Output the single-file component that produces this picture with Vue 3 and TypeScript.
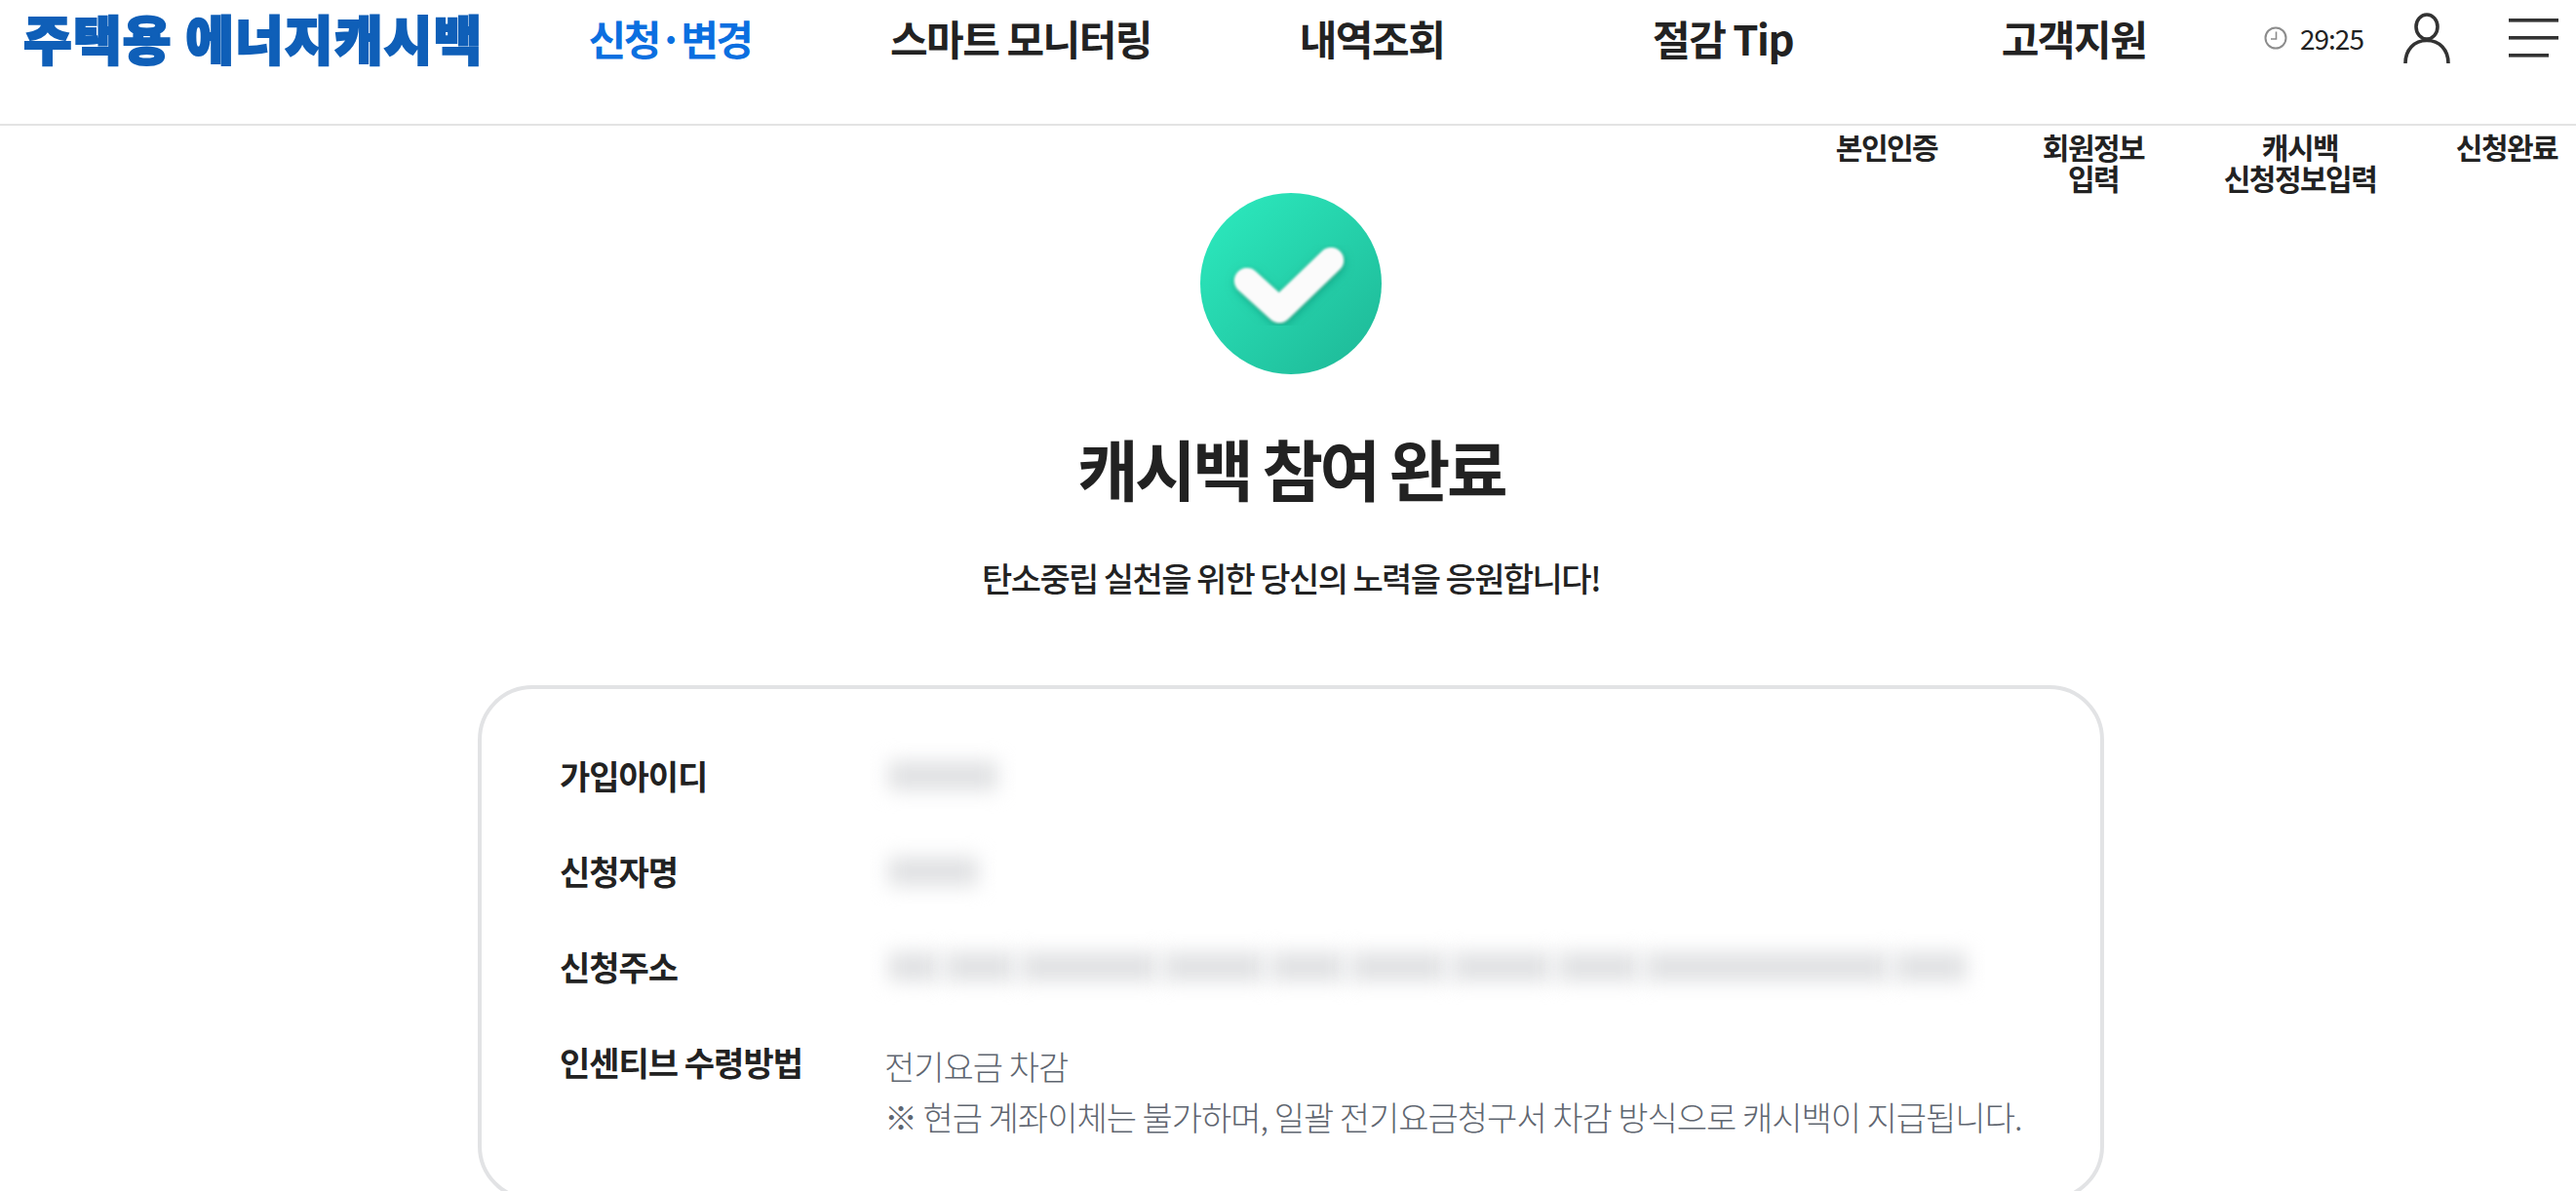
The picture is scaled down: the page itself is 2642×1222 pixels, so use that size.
<script setup lang="ts">
interface InfoRow {
  label: string;
  blurred?: number[];
  lines?: string[];
}

const navItems = ['신청·변경', '스마트 모니터링', '내역조회', '절감 Tip', '고객지원'];

const steps = ['본인인증', '회원정보\n입력', '캐시백\n신청정보입력', '신청완료'];

const rows: InfoRow[] = [
  { label: '가입아이디', blurred: [112] },
  { label: '신청자명', blurred: [92] },
  {
    label: '신청주소',
    blurred: [52, 72, 140, 104, 76, 98, 102, 84, 250, 74]
  },
  {
    label: '인센티브 수령방법',
    lines: ['전기요금 차감', '※ 현금 계좌이체는 불가하며, 일괄 전기요금청구서 차감 방식으로 캐시백이 지급됩니다.']
  }
];
</script>

<template>
  <div class="page">
    <header class="header">
      <div class="logo">주택용 에너지캐시백</div>
      <nav class="nav">
        <a
            v-for="(item, i) in navItems"
            :key="item"
            class="nav-item"
            :class="{ active: i === 0 }"
        >{{ item }}</a>
      </nav>
      <div class="tools">
        <svg class="clock" width="24" height="24" viewBox="0 0 24 24" fill="none" stroke="#8c8c8c">
          <circle cx="12" cy="12" r="10.5" stroke-width="2" />
          <path d="M12.5 5.5V13H7" stroke-width="1.6" />
        </svg>
        <span class="time">29:25</span>
        <svg class="user" width="50" height="52" viewBox="0 0 50 52" fill="none" stroke="#333" stroke-width="3.6">
          <ellipse cx="25" cy="14.5" rx="11" ry="12.5" />
          <path d="M3 52C3 38 12 28.5 25 28.5S47 38 47 52" />
        </svg>
        <svg class="menu" width="51" height="40" viewBox="0 0 51 40" fill="#333">
          <rect x="0" y="0" width="51" height="3.6" />
          <rect x="0" y="18" width="51" height="3.6" />
          <rect x="0" y="36" width="41" height="3.6" />
        </svg>
      </div>
    </header>

    <ol class="steps">
      <li v-for="step in steps" :key="step" class="step">{{ step }}</li>
    </ol>

    <main class="content">
      <svg class="done-icon" width="186" height="186" viewBox="0 0 186 186">
        <defs>
          <linearGradient id="doneFill" x1="0.12" y1="0.1" x2="0.9" y2="0.9">
            <stop offset="0" stop-color="#2be6bb" />
            <stop offset="1" stop-color="#1fbc9a" />
          </linearGradient>
          <filter id="doneShadow" x="-30%" y="-30%" width="160%" height="160%">
            <feGaussianBlur in="SourceGraphic" stdDeviation="1.2" result="soft" />
            <feDropShadow in="soft" dx="1" dy="3" stdDeviation="5" flood-color="#0f8a6e" flood-opacity="0.6" />
          </filter>
        </defs>
        <circle cx="93" cy="93" r="93" fill="url(#doneFill)" />
        <path
            d="M48 90L81 120L134 69"
            fill="none"
            stroke="#fbfbfb"
            stroke-width="26"
            stroke-linecap="round"
            stroke-linejoin="round"
            filter="url(#doneShadow)"
        />
      </svg>

      <h1 class="title">캐시백 참여 완료</h1>
      <p class="subtitle">탄소중립 실천을 위한 당신의 노력을 응원합니다!</p>

      <section class="card">
        <div v-for="row in rows" :key="row.label" class="row">
          <div class="row-label">{{ row.label }}</div>
          <div v-if="row.blurred" class="row-blur">
            <span
                v-for="(w, i) in row.blurred"
                :key="i"
                class="blur-chunk"
                :style="{ width: `${w}px` }"
            ></span>
          </div>
          <div v-else class="row-value">
            <div v-for="line in row.lines" :key="line">{{ line }}</div>
          </div>
        </div>
      </section>
    </main>
  </div>
</template>

<style>
html,
body {
  overflow: hidden;
  background: #fff;
}
</style>

<style scoped>
.page {
  font-family: "Noto Sans CJK KR", "Noto Sans", sans-serif;
  color: #222;
  height: 1222px;
  overflow: hidden;
}

.header {
  display: flex;
  align-items: center;
  height: 78px;
  padding: 0 18px 49px 24px;
  border-bottom: 2px solid #e3e3e3;
}

.logo {
  width: 483px;
  flex-shrink: 0;
  font-size: 54px;
  font-weight: 900;
  line-height: 1;
  letter-spacing: 1.2px;
  color: #0f5fb8;
  white-space: nowrap;
  -webkit-text-stroke: 2px #0f5fb8;
  filter: blur(0.4px);
}

.nav {
  display: grid;
  grid-template-columns: repeat(5, 360px);
  flex-shrink: 0;
}

.nav-item {
  text-align: center;
  font-size: 42px;
  font-weight: 700;
  line-height: 60px;
  letter-spacing: -1.5px;
  white-space: nowrap;
}

.nav-item.active {
  color: #0b6fe0;
  letter-spacing: -2.5px;
}

.tools {
  display: flex;
  align-items: center;
  margin-left: 15px;
}

.time {
  margin-left: 13px;
  font-size: 28px;
  letter-spacing: -1px;
  color: #222;
}

.user {
  margin-left: 40px;
}

.menu {
  margin-left: 59px;
}

.steps {
  display: grid;
  grid-template-columns: repeat(4, 106px);
  column-gap: 106px;
  justify-content: end;
  list-style: none;
  margin: 0;
  padding: 5px 18px 0 0;
  height: 64px;
}

.step {
  display: flex;
  flex-direction: column;
  align-items: center;
  text-align: center;
  font-size: 30px;
  font-weight: 700;
  line-height: 32px;
  letter-spacing: -1.5px;
  white-space: pre;
}

.content {
  display: flex;
  flex-direction: column;
  align-items: center;
  padding-left: 6px;
}

.done-icon {
  display: block;
}

.title {
  margin: 56px 0 0;
  font-size: 68px;
  font-weight: 700;
  line-height: 80px;
  letter-spacing: -3.4px;
}

.subtitle {
  margin: 49px 0 0;
  font-size: 34px;
  font-weight: 500;
  line-height: 48px;
  letter-spacing: -1.6px;
}

.card {
  box-sizing: border-box;
  width: 1668px;
  margin-top: 86px;
  padding: 63px 80px 56px;
  border: 4px solid #e2e3e5;
  border-radius: 56px;
  display: flex;
  flex-direction: column;
  gap: 46px;
}

.row {
  display: grid;
  grid-template-columns: 333px 1fr;
  line-height: 52px;
  font-size: 34px;
  letter-spacing: -1px;
}

.row-label {
  font-weight: 700;
}

.row-blur {
  display: flex;
  align-items: center;
  gap: 6px;
  height: 52px;
  padding-left: 4px;
}

.blur-chunk {
  display: block;
  height: 30px;
  background: #e0e1e3;
  filter: blur(10px);
}

.row-value {
  font-weight: 300;
  color: #5f6670;
  padding-top: 4px;
}
</style>
